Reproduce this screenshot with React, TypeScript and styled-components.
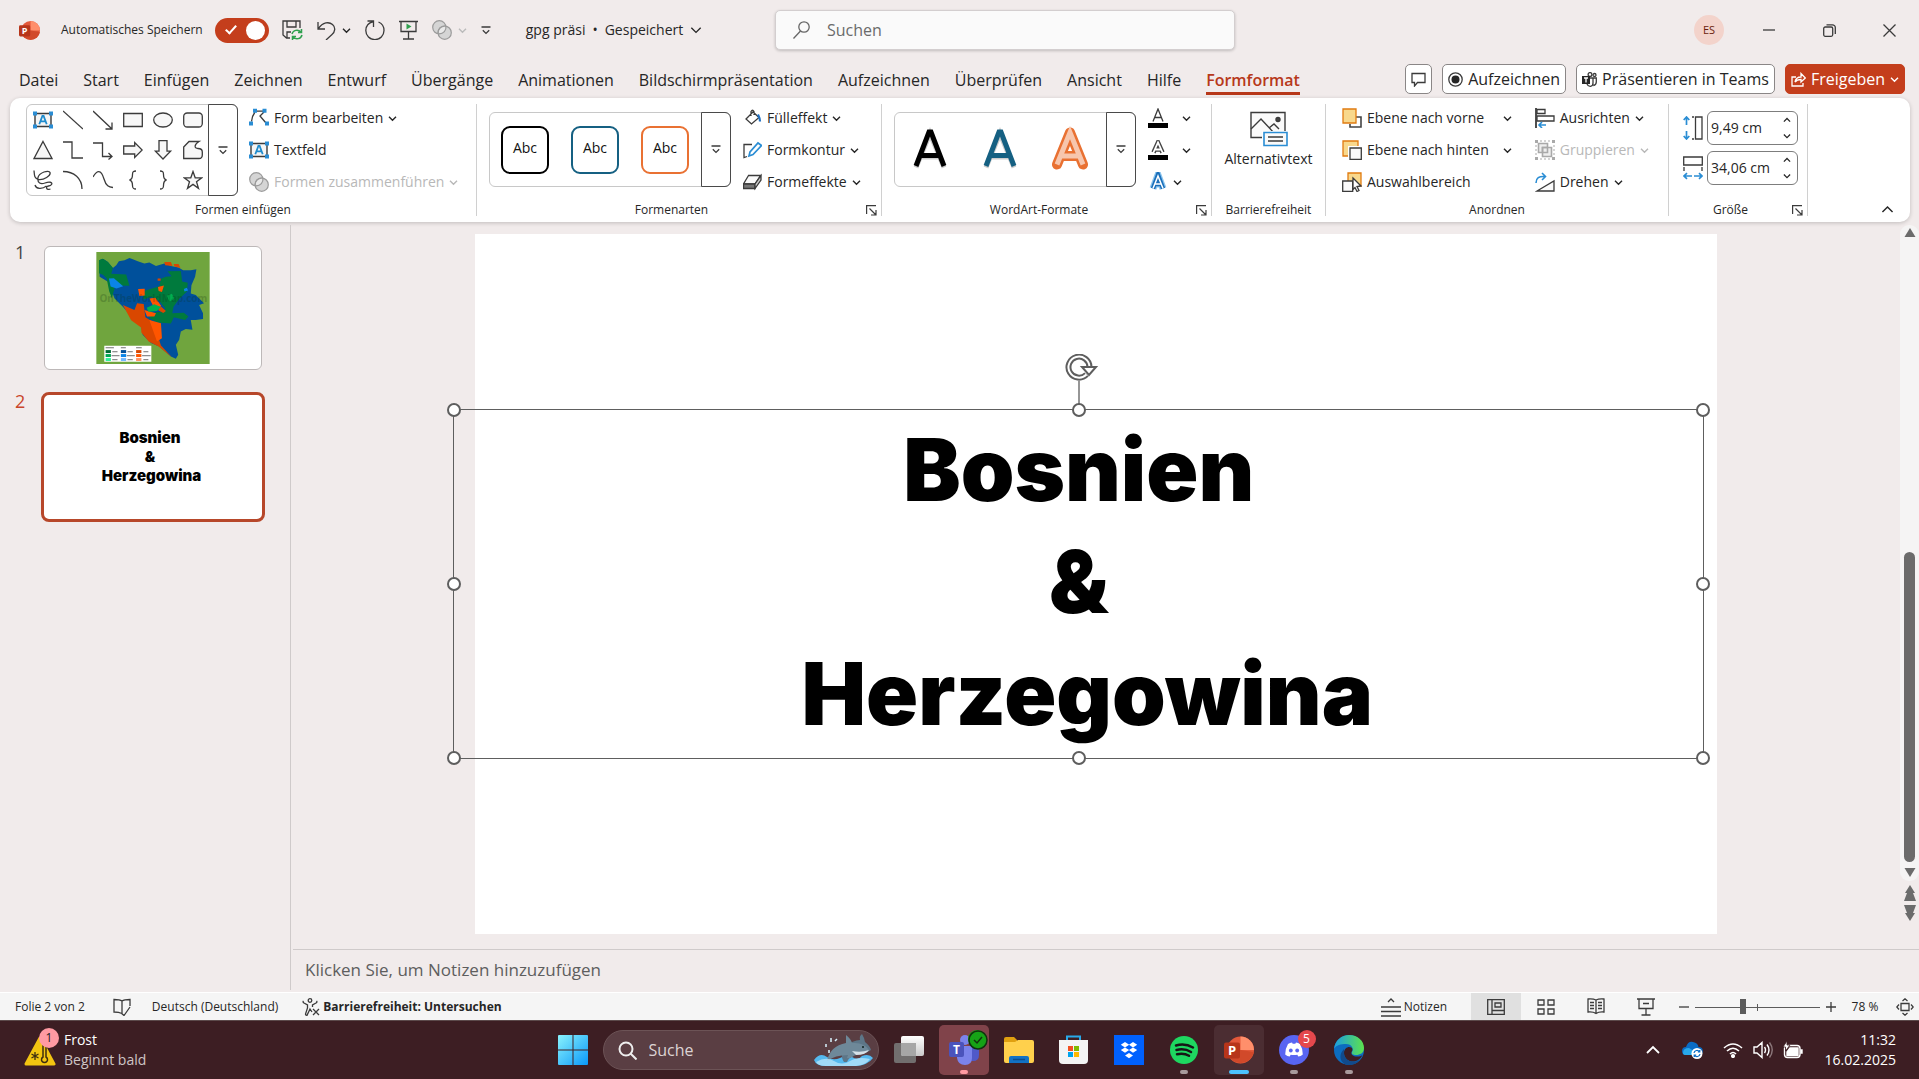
import React, { useState } from "react";
import styled, { createGlobalStyle, css } from "styled-components";

const Global = createGlobalStyle`
  *, *::before, *::after { box-sizing: border-box; }
  body { margin: 0; background: #f1ebeb; color: #262626; font-family: "Open Sans", "Noto Sans", sans-serif; font-size: 14px; line-height: 20px; }
  button, input, textarea { font: inherit; color: inherit; margin: 0; padding: 0; }
  button { background: none; border: 0; }
  svg { display: block; flex: none; }
`;

const Window = styled.div`
  display: flex;
  flex-direction: column;
  height: 100vh;
  overflow: hidden;
`;

/* ---------- icon helper ---------- */
type IconProps = { w?: number; h?: number; box?: string; color?: string; sw?: number; children?: React.ReactNode };
const Icon = ({ w = 20, h = w, box = `0 0 ${w} ${h}`, color = "#3b3b3b", sw = 1.3, children }: IconProps) => (
  <svg width={w} height={h} viewBox={box} fill="none" stroke={color} strokeWidth={sw} aria-hidden="true">
    {children}
  </svg>
);
const Chevron = ({ color = "#262626", w = 9, up = false }: { color?: string; w?: number; up?: boolean }) => (
  <Icon w={w} box="0 0 9 9" color={color} sw={w > 9 ? 1 : 1.4}>
    <path d={up ? "M1 6.3 4.5 2.8 8 6.3" : "M1 2.8 4.5 6.3 8 2.8"} />
  </Icon>
);
const MoreGlyph = () => (
  <Icon w={10} h={9} sw={1.3}>
    <path d="M.5 1h9M1.8 4.2 5 7.4l3.2-3.2" />
  </Icon>
);

/* ---------- title bar ---------- */
const TitleBar = styled.header`
  display: grid;
  grid-template-columns: 775fr minmax(200px, 460px) 684fr;
  align-items: center;
  height: 60px;
  flex: none;
`;
const TitleLeft = styled.div`
  display: flex;
  align-items: center;
  padding-left: 19px;
  min-width: 0;
`;
const SaveLabel = styled.label`
  display: flex;
  align-items: center;
  gap: 12px;
  margin-left: 21px;
  font-size: 12px;
  white-space: nowrap;
`;
const Toggle = styled.input`
  appearance: none;
  width: 54px;
  height: 25px;
  border-radius: 13px;
  background: #c43e1c;
  position: relative;
  &::after {
    content: "";
    position: absolute;
    right: 4px;
    top: 3px;
    width: 19px;
    height: 19px;
    border-radius: 50%;
    background: #fff;
  }
  &::before {
    content: "";
    position: absolute;
    left: 13px;
    top: 5px;
    width: 6px;
    height: 11px;
    border: solid #fff;
    border-width: 0 2px 2px 0;
    transform: rotate(42deg);
  }
`;
const QuickBar = styled.div`
  display: flex;
  align-items: center;
  gap: 14px;
  margin-left: 13px;
`;
const QuickButton = styled.button`
  display: flex;
  align-items: center;
  gap: 6px;
  height: 28px;
`;
const DocName = styled.button`
  display: flex;
  align-items: center;
  gap: 7px;
  margin-left: 35px;
  font-size: 14px;
  white-space: nowrap;
`;
const SearchBox = styled.label`
  display: flex;
  align-items: center;
  gap: 17px;
  height: 40px;
  padding: 0 17px;
  background: #fafafa;
  border: 1px solid #d3cecf;
  border-radius: 5px;
  box-shadow: 0 1px 3px #0003;
`;
const SearchInput = styled.input`
  flex: 1;
  min-width: 0;
  border: 0;
  background: none;
  outline: 0;
  font-size: 16px;
  &::placeholder { color: #6b6b6b; opacity: 1; }
`;
const TitleRight = styled.div`
  display: flex;
  align-items: center;
  justify-content: flex-end;
`;
const Avatar = styled.button`
  width: 30px;
  height: 30px;
  border-radius: 50%;
  background: #f3d3cb;
  color: #6b1d0c;
  font-size: 11px;
  margin-right: 15px;
`;
const WinButton = styled.button`
  display: grid;
  place-items: center;
  width: 60px;
  height: 60px;
`;

/* ---------- tabs ---------- */
const TabRow = styled.nav`
  display: flex;
  align-items: flex-start;
  justify-content: space-between;
  height: 38px;
  padding: 4px 14px 0 19px;
  flex: none;
`;
const Tabs = styled.div`
  display: flex;
  gap: 25px;
`;
const Tab = styled.button<{ $on?: boolean }>`
  height: 31px;
  padding-top: 3px;
  font-size: 16px;
  white-space: nowrap;
  border-bottom: 3px solid transparent;
  ${(p) => p.$on && css`color: #b7381a; font-weight: 600; border-color: #b7381a;`}
`;
const Actions = styled.div`
  display: flex;
  gap: 10px;
`;
const Action = styled.button<{ $primary?: boolean }>`
  display: flex;
  align-items: center;
  gap: 5px;
  height: 30px;
  padding: 0 5px;
  border: 1px solid #8a8686;
  border-radius: 5px;
  background: #fff;
  font-size: 16px;
  white-space: nowrap;
  ${(p) => p.$primary && css`background: #c43e1c; border-color: #c43e1c; color: #fff;`}
`;

/* ---------- ribbon ---------- */
const Ribbon = styled.section`
  display: flex;
  height: 124px;
  margin: 0 9px 0 10px;
  padding: 6px 0;
  border-radius: 10px;
  background: #fff;
  box-shadow: 0 1px 4px #0003;
  flex: none;
`;
const Group = styled.div<{ $w: number }>`
  display: flex;
  flex-direction: column;
  flex: 0 1 ${(p) => p.$w}px;
  min-width: 0;
  height: 112px;
  border-right: 1px solid #d0d0d0;
`;
const GroupBody = styled.div<{ $pad?: number; $gap?: number }>`
  display: flex;
  gap: ${(p) => p.$gap ?? 12}px;
  height: 100px;
  padding-left: ${(p) => p.$pad ?? 12}px;
`;
const GroupFoot = styled.div`
  display: grid;
  grid-template-columns: 1fr 15px;
  align-items: center;
  height: 12px;
  font-size: 12px;
  line-height: 12px;
  text-align: center;
  white-space: nowrap;
`;
const FootLabel = styled.span<{ $wide?: boolean }>`
  grid-column: ${(p) => (p.$wide ? "1 / -1" : "1")};
`;
const Gallery = styled.div<{ $tall?: boolean }>`
  display: flex;
  align-self: flex-start;
  height: ${(p) => (p.$tall ? 92 : 75)}px;
  margin-top: ${(p) => (p.$tall ? 0 : 8)}px;
  border: 1px solid #c8c8c8;
  border-radius: 6px;
`;
const ShapeGrid = styled.div`
  display: grid;
  grid-template-columns: repeat(6, 30px);
  grid-template-rows: repeat(3, 30px);
  padding: 0 1px;
`;
const Cell = styled.button`
  display: grid;
  place-items: center;
`;
const StyleRow = styled.div`
  display: grid;
  grid-template-columns: repeat(3, 70px);
  width: 212px;
`;
const StyleTile = styled.span<{ $c: string }>`
  display: grid;
  place-items: center;
  width: 48px;
  height: 48px;
  padding-bottom: 4px;
  border: 2px solid ${(p) => p.$c};
  border-radius: 9px;
  color: #111;
  font-size: 14px;
`;
const MoreButton = styled.button`
  display: grid;
  place-items: center;
  width: 30px;
  margin: -1px;
  border: 1px solid #4a4a4a;
  border-radius: 0 6px 6px 0;
`;
const Commands = styled.div`
  display: grid;
  grid-template-rows: repeat(3, 32px);
  align-content: start;
  margin-top: -2px;
`;
const Command = styled.button<{ $off?: boolean }>`
  display: flex;
  align-items: center;
  gap: 5px;
  font-size: 14px;
  white-space: nowrap;
  ${(p) => p.$off && css`color: #b8b8b8;`}
`;
const SplitCommand = styled(Command)`
  justify-content: space-between;
  gap: 14px;
`;
const CommandMain = styled.span`
  display: flex;
  align-items: center;
  gap: 5px;
`;
const BigCommand = styled.button`
  display: flex;
  flex-direction: column;
  align-items: center;
  align-self: flex-start;
  gap: 2px;
  width: 100%;
  padding-top: 7px;
  font-size: 14px;
`;
const Sizes = styled.div`
  display: grid;
  gap: 6px;
  align-content: start;
  padding-top: 7px;
`;
const SizeLabel = styled.label`
  display: flex;
  align-items: center;
  gap: 4px;
`;
const SpinBox = styled.span`
  display: flex;
  align-items: center;
  width: 91px;
  height: 34px;
  padding: 0 6px 0 3px;
  border: 1px solid #7d7d7d;
  border-radius: 6px;
`;
const SpinInput = styled.input`
  flex: 1;
  min-width: 0;
  border: 0;
  outline: 0;
  background: none;
  font-size: 14px;
`;
const SpinArrows = styled.span`
  display: grid;
  gap: 8px;
`;
const Collapse = styled.button`
  align-self: flex-end;
  margin: 0 16px 0 auto;
`;

/* ---------- workspace ---------- */
const Workspace = styled.main`
  display: flex;
  flex: 1;
  min-height: 0;
  padding-top: 3px;
`;
const SlideList = styled.aside`
  display: flex;
  flex-direction: column;
  gap: 22px;
  width: 291px;
  padding: 21px 0 0 15px;
  margin-bottom: 2px;
  border-right: 1px solid #cfcaca;
  flex: none;
`;
const SlideItem = styled.button<{ $on?: boolean }>`
  display: grid;
  grid-template-columns: 26px 224px;
  align-items: start;
  text-align: left;
  font-size: 18px;
  line-height: 12px;
  color: ${(p) => (p.$on ? "#c9452a" : "#444")};
`;
const Thumb = styled.span<{ $on?: boolean }>`
  display: grid;
  place-items: center;
  height: ${(p) => (p.$on ? 130 : 124)}px;
  margin: ${(p) => (p.$on ? "0" : "0 3px")};
  background: #fff;
  border: ${(p) => (p.$on ? "3px solid #b7472a" : "1px solid #bdb8b8")};
  border-radius: ${(p) => (p.$on ? 8 : 6)}px;
`;
const SlideNumber = styled.span<{ $on?: boolean }>`
  padding-top: ${(p) => (p.$on ? 3 : 0)}px;
`;
const ThumbText = styled.span`
  padding: 0 6px 2px 0;
  font-family: Inter, "Noto Sans", sans-serif;
  font-weight: 900;
  font-size: 15px;
  line-height: 19px;
  color: #000;
  text-align: center;
  white-space: pre;
`;
const Editor = styled.div`
  display: flex;
  flex-direction: column;
  flex: 1;
  min-width: 0;
`;
const StageRow = styled.div`
  display: flex;
  flex: 1;
  min-height: 0;
`;
const Stage = styled.div`
  display: flex;
  justify-content: center;
  flex: 1;
  min-width: 0;
  padding: 9px 0 15px;
`;
const Slide = styled.div`
  position: relative;
  height: 100%;
  aspect-ratio: 1242 / 700;
  background: #fff;
`;
const Selection = styled.div`
  position: absolute;
  left: -1.7%;
  top: 25%;
  width: 100.7%;
  height: 50%;
  display: grid;
  place-items: center;
  border: 1px solid #5e5e5e;
`;
const SlideTitle = styled.h1`
  margin: 0;
  padding-bottom: 4px;
  font-family: Inter, "Noto Sans", sans-serif;
  font-weight: 900;
  font-size: 86px;
  line-height: 112px;
  color: #000;
  text-align: center;
  white-space: pre;
`;
const Handle = styled.span<{ $x: number; $y: number }>`
  position: absolute;
  left: ${(p) => p.$x}%;
  top: ${(p) => p.$y}%;
  width: 14px;
  height: 14px;
  margin: -7px;
  border: 2px solid #5e5e5e;
  border-radius: 50%;
  background: #fff;
`;
const Rotator = styled.span`
  position: absolute;
  left: 50%;
  bottom: 100%;
  margin-left: -14px;
`;
const ScrollColumn = styled.div`
  display: flex;
  flex-direction: column;
  align-items: center;
  gap: 4px;
  width: 19px;
  padding-bottom: 28px;
`;
const Track = styled.div`
  display: flex;
  flex-direction: column;
  align-items: center;
  flex: 1;
  width: 19px;
  padding: 3px 0 4px;
  background: #f5f4f4;
  border-radius: 9px;
`;
const TrackThumb = styled.div`
  width: 11px;
  height: 310px;
  margin: auto 0 6px;
  border-radius: 6px;
  background: #6b6b6b;
`;
const Notes = styled.label`
  display: flex;
  margin-left: 2px;
  height: 43px;
  padding: 8px 12px;
  border-top: 1px solid #cfcaca;
  flex: none;
`;
const NotesField = styled.textarea`
  flex: 1;
  height: 24px;
  border: 0;
  outline: 0;
  resize: none;
  overflow: hidden;
  background: none;
  font-size: 17px;
  line-height: 24px;
  &::placeholder { color: #5e5e5e; opacity: 1; }
`;

/* ---------- status bar ---------- */
const Status = styled.footer`
  display: flex;
  align-items: center;
  height: 28px;
  padding: 0 5px 0 15px;
  background: #f5f5f5;
  border-top: 1px solid #fff;
  font-size: 12px;
  white-space: nowrap;
  flex: none;
`;
const StatusButton = styled.button<{ $ml?: number; $bold?: boolean }>`
  display: flex;
  align-items: center;
  gap: 3px;
  margin-left: ${(p) => p.$ml ?? 0}px;
  font-weight: ${(p) => (p.$bold ? 700 : 400)};
`;
const Views = styled.div`
  display: flex;
  margin-left: 24px;
`;
const ViewButton = styled.button<{ $on?: boolean }>`
  display: grid;
  place-items: center;
  width: 50px;
  height: 27px;
  background: ${(p) => (p.$on ? "#e0e0e0" : "none")};
`;
const Spacer = styled.div`
  flex: 1;
`;
const Zoom = styled.div`
  display: flex;
  align-items: center;
  gap: 6px;
  margin-left: 8px;
`;
const ZoomSlider = styled.input`
  appearance: none;
  width: 125px;
  height: 16px;
  background:
    linear-gradient(#5c5c5c, #5c5c5c) 62px 5px / 1px 7px no-repeat,
    linear-gradient(#5c5c5c, #5c5c5c) 0 8px / 100% 1px no-repeat;
  &::-webkit-slider-thumb {
    appearance: none;
    width: 6px;
    height: 15px;
    background: #5c5c5c;
  }
`;
const ZoomValue = styled.button`
  width: 42px;
  margin-left: 8px;
  font-size: 12px;
`;

/* ---------- taskbar ---------- */
const Taskbar = styled.div`
  display: grid;
  grid-template-columns: 1fr auto 1fr;
  align-items: center;
  height: 59px;
  background: #3d1e23;
  border-top: 1px solid #5c4a4b;
  color: #fff;
  flex: none;
`;
const Weather = styled.button`
  display: flex;
  gap: 8px;
  align-items: center;
  padding-left: 24px;
  text-align: left;
  font-size: 14px;
`;
const Muted = styled.span`
  display: block;
  color: #cfc5c6;
`;
const Apps = styled.div`
  display: flex;
  gap: 5px;
  padding-left: 2px;
`;
const App_ = styled.button<{ $bg?: string }>`
  position: relative;
  display: grid;
  place-items: center;
  width: 50px;
  height: 50px;
  border-radius: 5px;
  background: ${(p) => p.$bg ?? "none"};
`;
const RunMark = styled.span<{ $c?: string; $w?: number }>`
  position: absolute;
  bottom: 1px;
  left: 50%;
  width: ${(p) => p.$w ?? 8}px;
  height: 4px;
  margin-left: ${(p) => -(p.$w ?? 8) / 2}px;
  border-radius: 2px;
  background: ${(p) => p.$c ?? "#a89a9c"};
`;
const Badge = styled.span<{ $c: string; $ink?: string }>`
  position: absolute;
  right: 3px;
  top: 5px;
  display: grid;
  place-items: center;
  width: 18px;
  height: 18px;
  border-radius: 50%;
  background: ${(p) => p.$c};
  color: ${(p) => p.$ink ?? "#fff"};
  font-size: 12px;
  line-height: 18px;
`;
const WeatherIcon = styled.span`
  position: relative;
  padding-top: 2px;
`;
const WeatherBadge = styled(Badge)`
  right: -3px;
  top: -6px;
  width: 20px;
  height: 20px;
`;
const TaskSearch = styled.label`
  display: flex;
  align-items: center;
  gap: 12px;
  align-self: center;
  width: 276px;
  height: 40px;
  padding: 0 4px 0 14px;
  border: 1px solid #6c5356;
  border-radius: 20px;
  background: #5a3e43;
`;
const TaskInput = styled.input`
  flex: 1;
  min-width: 0;
  border: 0;
  outline: 0;
  background: none;
  font-size: 16px;
  &::placeholder { color: #dcd3d4; opacity: 1; }
`;
const Tray = styled.div`
  display: flex;
  align-items: center;
  justify-content: flex-end;
  gap: 10px;
  padding-right: 23px;
`;
const TrayButton = styled.button<{ $mr?: number }>`
  margin-right: ${(p) => p.$mr ?? 0}px;
`;
const Clock = styled.button`
  width: 74px;
  text-align: right;
  font-size: 14px;
  white-space: nowrap;
`;

/* ---------- drawings ---------- */
const TextBoxIcon = () => (
  <Icon w={20} sw={1.4}>
    <path d="M2 3.5h16v13H2z" fill="#f5f5f5" />
    <path d="M6.3 14.2 9.4 6h1.2l3.1 8.2M7.4 11.4h5.2" stroke="#1e8bcd" strokeWidth="1.8" />
    <path d="M0 1.5h4v4H0zM16 1.5h4v4h-4zM0 14.5h4v4H0zM16 14.5h4v4h-4z" fill="#2a8dd4" stroke="none" />
  </Icon>
);
const MergeIcon = () => (
  <Icon w={20} color="#9b9b9b" sw={1.2}>
    <circle cx="7.3" cy="7.3" r="6.6" fill="#d5d5d5" />
    <circle cx="12.7" cy="12.7" r="6.6" fill="#d5d5d5" />
    <path d="M6.100 12.700A6.600 6.600 0 0 1 12.700 6.100q1.100 0 1.200.2A6.600 6.600 0 0 1 7.300 13.900z" fill="#e9e9e9" />
  </Icon>
);
const shapes: { name: string; art: React.ReactNode }[] = [
  { name: "Linie", art: <path d="M0 1l20 18" /> },
  { name: "Pfeil", art: <path d="M0 1l19 18M12.5 19H19v-6.5" /> },
  { name: "Rechteck", art: <path d="M.7 3.5h18.6v13H.7z" fill="#f7f7f7" /> },
  { name: "Ellipse", art: <ellipse cx="10" cy="10" rx="9.3" ry="7" fill="#f7f7f7" /> },
  { name: "Abgerundetes Rechteck", art: <rect x=".7" y="3" width="18.6" height="14" rx="3.5" fill="#f7f7f7" /> },
  { name: "Dreieck", art: <path d="M10 1.5 19 18.5H1z" fill="#f7f7f7" /> },
  { name: "Winkel", art: <path d="M0 2h9v16h11" /> },
  { name: "Winkelpfeil", art: <path d="M0 3h9.500v13.500H19M15.500 13l3.500 3.500-3.500 3" /> },
  { name: "Pfeil rechts", art: <path d="M.7 6h11V2.500l7.500 7.500-7.500 7.500V14H.7z" fill="#f7f7f7" /> },
  { name: "Pfeil unten", art: <path d="M6 .7h8v10.500h3.600L10 19l-7.600-7.800H6z" fill="#f7f7f7" /> },
  { name: "Freihandform", art: <path d="M.7 7 6 1.500h10c-5 3-5 7-1 7 3 0 4.300 1 4.300 3.500v3c0 2-1.500 3.500-3.300 3.500H.7z" fill="#f7f7f7" /> },
  { name: "Skizze", art: <path d="M1 .5C1.500 5 1 8 5 9.500c6 1 13-4 12-7s-11 0-12 5c-1 6 3 7 7 5.500s8-1 6.500 1.500-5 .5-5 3 2.500 2 4 1.500M13.500 16C9 19.500 3 19 2 15" /> },
  { name: "Bogen", art: <path d="M0 1.500c11 0 19 7 19 17.500" /> },
  { name: "Kurve", art: <path d="M0 7c4-7 8-8 11 2 2 7 5 8 9 8.500" /> },
  { name: "Geschweifte Klammer links", art: <path d="M13 1c-3 0-3.500.8-3.500 3.500S9 9.500 6.500 10c2.500.5 3 3 3 5.500S10 19 13 19" /> },
  { name: "Geschweifte Klammer rechts", art: <path d="M7 1c3 0 3.500.8 3.500 3.500S11 9.500 13.500 10c-2.500.5-3 3-3 5.500S10 19 7 19" /> },
  { name: "Stern", art: <path d="m10 1.500 2.200 6.300h6.600l-5.300 4 2 6.600L10 14.400l-5.500 4 2-6.600-5.300-4h6.600z" fill="#f7f7f7" /> },
];
const PptLogo = ({ s = 21 }: { s?: number }) => (
  <svg width={s} height={s} viewBox="0 0 30 30" aria-hidden="true">
    <circle cx="16.500" cy="15" r="13.500" fill="#e2583a" />
    <path d="M16.500 1.500A13.500 13.500 0 0 1 30 15H16.500z" fill="#ff8f6b" />
    <path d="M3.200 17a13.500 13.500 0 0 0 26.600 0L16.500 15z" fill="#d1492a" />
    <rect y="7.500" width="16" height="16" rx="2" fill="#b7351a" />
    <text x="8" y="20" textAnchor="middle" fontFamily="Open Sans, sans-serif" fontSize="13" fontWeight="700" fill="#fff">P</text>
  </svg>
);
const BosniaMap = () => (
  <svg width="114" height="112" viewBox="0 0 342 338" role="img" aria-label="Karte Bosnien und Herzegowina">
    <path fill="#70a53e" d="M0 0h342v338H0z" />
    <path fill="#00509b" d="m8 25 12-5 15 10 15 18 10-8 8-12 17-3 15-7 10 4 15 6 20 7 15-3 20 10 25-7 20 7 23 5 14 8h23l17-3-4 23-11 25-2 25 15 5 25 25-15 5 12 25v17l-22 3h-15l5 30-20-3-15 8-5 25-10 15 7 30-7 12-15-7-35-30-25-10-25-25-5-30-25-20-30-35-25-25-10-25-10-25-25-15z" />
    <path fill="#007a3d" d="m8 25 12-5 15 10 15 18-5 18 45 2 10 34-35-1-10 8-8 30-8-20-8-40-11-10-12-5z" />
    <path fill="#007a3d" d="m215 58 40-1 4 32 17 4-3 27-22 20-18 25-4 20 35-2 14 12-10 10-34-8-9 19-40-3-27-14 22-18 25-1 3-10-18-22-25-13-22 8-3-15 8-12 20-6 22-7 5-22 14-6 18-2z" />
    <path fill="#0a84e8" d="m38 80 15-1 28 24-20 7-18-6zM264 112l9-4 4 8-11 3z" />
    <path fill="#d94700" d="m80 160 35 15 8-20 20 2 5 40 25 15 22 70 33 36-40-33-30-15-22-27-1-15-30-22zM205 30l20 0 5 12-22-2zM233 36l15 0 6 12-18-4zM185 80h9v7h-9zM190 160l20 18-8 6-15-8z" />
    <path fill="#ff5500" d="m126 112 20-1v20l-16 2zM186 106l18-5-6 20-10-3zM160 140l18-2 18 25-20 8zM160 205l35 10 3 45-15 10zM145 175l35 10-5 10-22 0z" />
    <path fill="#00b050" d="m152 168 23-10 20 8-12 12-26 2zM213 132l15-6 7 15-14 9z" />
    <text x="172" y="152" textAnchor="middle" fontFamily="Open Sans, sans-serif" fontWeight="700" fontSize="30" fill="#103010" opacity=".22">OnTheWorldMap.com</text>
    <path fill="#fff" d="M24 283h142v48H24z" />
    <path fill="#006b35" d="M28 296h16v9H28z" /><path fill="#00a651" d="M28 308h16v9H28z" /><path fill="#2ef29a" d="M28 320h16v9H28z" />
    <path fill="#00509b" d="M74 296h16v9H74z" /><path fill="#0a84e8" d="M74 308h16v9H74z" /><path fill="#72b8ff" d="M74 320h16v9H74z" />
    <path fill="#d94700" d="M120 296h16v9h-16z" /><path fill="#ff5500" d="M120 308h16v9h-16z" /><path fill="#ff9466" d="M120 320h16v9h-16z" />
    <path stroke="#555" strokeWidth="2.500" d="M28 289h25M74 289h15M120 289h17M48 301h16M46 313h24M48 325h16M94 301h16M92 313h24M94 325h16M142 301h15M138 313h26M142 325h15" />
  </svg>
);
const WordArtA = ({ fill, outline, shadow }: { fill: string; outline?: string; shadow?: boolean }) => (
  <svg width="44" height="48" viewBox="0 0 44 48" aria-hidden="true">
    {shadow && <path d="M8 41.500 22 7.500l14 34M13 31h18" fill="none" stroke="#0003" strokeWidth="5" />}
    {outline && <path d="M9 38.500 22 6.500l13 32M13.500 30h17" fill="none" stroke={outline} strokeWidth="10" strokeLinejoin="round" strokeLinecap="round" />}
    <path d={outline ? "M9 38.500 22 6.500l13 32M13.500 30h17" : "M8 40 21 6h2l13 34M13 29.500h18"} fill="none" stroke={fill} strokeWidth={5} />
  </svg>
);

const tabs = ["Datei", "Start", "Einfügen", "Zeichnen", "Entwurf", "Übergänge", "Animationen", "Bildschirmpräsentation", "Aufzeichnen", "Überprüfen", "Ansicht", "Hilfe", "Formformat"];
const slideText = "Bosnien\n&\n Herzegowina";
const handles = [[0, 0], [50, 0], [100, 0], [0, 50], [100, 50], [0, 100], [50, 100], [100, 100]];

const Launcher = ({ label }: { label: string }) => (
  <button aria-label={label}>
    <Icon w={11} sw={1.2}><path d="M.6 9V.6H10M3.500 3.500l6 6M10 5v5H5" /></Icon>
  </button>
);

const Header = () => (
  <TitleBar>
    <TitleLeft>
      <PptLogo />
      <SaveLabel>Automatisches Speichern<Toggle type="checkbox" defaultChecked /></SaveLabel>
      <QuickBar>
        <QuickButton aria-label="Speichern">
          <Icon w={21}>
            <path d="M8 18H4.500L1 15V1h17v7M5 1v6h9V1M5 18v-6h4" />
            <path d="M10 14c1-4 6-5 9-2M19.500 9v3.500H16M20 15c-1 4-6 5-9 2M10.500 20v-3.500H14" stroke="#2fa04e" strokeWidth="1.500" />
          </Icon>
        </QuickButton>
        <QuickButton aria-label="Rückgängig">
          <Icon w={19}><path d="M1 1v7h7M1.300 7.700C6 1 12 .5 15.500 3.500S18 11 15 13.500L9 19" /></Icon>
          <Chevron />
        </QuickButton>
        <QuickButton aria-label="Wiederholen">
          <Icon w={20}><path d="M2.500 1h6v6M8.300 1.500C3 3 .8 7 .8 10.500a9 9 0 0 0 18.200 0c0-4-2-7-5.500-8.500" /></Icon>
        </QuickButton>
        <QuickButton aria-label="Präsentation starten">
          <Icon w={19} h={20}><path d="M0 1.500h19M2 1.500v10h15v-10M9.500 12v7M4 19h11" /><path d="m7.500 3.500 5 3-5 3z" fill="#2fa04e" stroke="none" /></Icon>
        </QuickButton>
        <QuickButton aria-label="Formen zusammenführen" disabled>
          <MergeIcon /><Chevron color="#bbb" />
        </QuickButton>
        <QuickButton aria-label="Symbolleiste anpassen"><MoreGlyph /></QuickButton>
      </QuickBar>
      <DocName><span>gpg präsi</span><span>•</span><span>Gespeichert</span><Chevron w={12} /></DocName>
    </TitleLeft>
    <SearchBox>
      <Icon w={17} h={18} color="#666"><circle cx="11" cy="6" r="5.200" /><path d="m7.500 10-7 7.500" /></Icon>
      <SearchInput placeholder="Suchen" aria-label="Suchen" />
    </SearchBox>
    <TitleRight>
      <Avatar>ES</Avatar>
      <WinButton aria-label="Minimieren"><Icon w={12}><path d="M0 6h12" /></Icon></WinButton>
      <WinButton aria-label="Wiederherstellen"><Icon w={13}><rect x=".7" y="3" width="9" height="9.300" rx="1.500" /><path d="M3.500 .8h6a2.800 2.800 0 0 1 2.800 2.800V10" /></Icon></WinButton>
      <WinButton aria-label="Schließen"><Icon w={13}><path d="m.5.5 12 12M12.500.5l-12 12" /></Icon></WinButton>
    </TitleRight>
  </TitleBar>
);

const RibbonPanel = () => {
  const [h, setH] = useState("9,49 cm");
  const [w, setW] = useState("34,06 cm");
  return (
    <Ribbon>
      <Group $w={467}>
        <GroupBody $pad={16} $gap={11}>
          <Gallery $tall>
            <ShapeGrid>
              <Cell aria-label="Textfeld"><TextBoxIcon /></Cell>
              {shapes.map((s) => <Cell key={s.name} aria-label={s.name}><Icon w={20}>{s.art}</Icon></Cell>)}
            </ShapeGrid>
            <MoreButton aria-label="Weitere Formen"><MoreGlyph /></MoreButton>
          </Gallery>
          <Commands>
            <Command>
              <Icon w={20}><path d="M2.500 13.500Q3 8 6 4M7 3.200h8M15 4l-4 4 6 7" /><path d="M4 .8h4v4H4zM13.500.8h4v4h-4zM0 13.500h4v4H0zM16 13.500h4v4h-4z" fill="#2a8dd4" stroke="none" /></Icon>
              Form bearbeiten<Chevron />
            </Command>
            <Command><TextBoxIcon />Textfeld</Command>
            <Command $off disabled><MergeIcon />Formen zusammenführen<Chevron color="#b8b8b8" /></Command>
          </Commands>
        </GroupBody>
        <GroupFoot><FootLabel $wide>Formen einfügen</FootLabel></GroupFoot>
      </Group>

      <Group $w={405}>
        <GroupBody>
          <Gallery>
            <StyleRow>
              {["#000", "#156082", "#e97132"].map((c) => <Cell key={c}><StyleTile $c={c}>Abc</StyleTile></Cell>)}
            </StyleRow>
            <MoreButton aria-label="Weitere Formenarten"><MoreGlyph /></MoreButton>
          </Gallery>
          <Commands>
            <Command><Icon w={19}><path d="m10 3-7 7 5.500 5 7.500-6.500zM8 7V2.500Q9.500 0 11 2.500V6" /><path d="M15 5.500q2 4 2 7" stroke="#1f6fc0" strokeWidth="2.200" /></Icon>Fülleffekt<Chevron /></Command>
            <Command><Icon w={19}><path d="M9 3.500H1v13l3-1" /><path d="m6 15 1-4 8-9 3.500 2.500-8.500 9z" stroke="#2a8dd4" strokeWidth="1.700" /></Icon>Formkontur<Chevron /></Command>
            <Command><Icon w={19}><path d="m5.500 2.500-5 8.500H12l5.500-8.500z" fill="#fafafa" /><path d="M.5 11v4.500H12V11z" fill="#777" /><path d="M12 15.500V11l6-8.500v4.500z" fill="#ccc" /></Icon>Formeffekte<Chevron /></Command>
          </Commands>
        </GroupBody>
        <GroupFoot><FootLabel>Formenarten</FootLabel><Launcher label="Formenarten öffnen" /></GroupFoot>
      </Group>

      <Group $w={330}>
        <GroupBody>
          <Gallery>
            <StyleRow>
              <Cell aria-label="WordArt schwarz"><WordArtA fill="#000" shadow /></Cell>
              <Cell aria-label="WordArt blau"><WordArtA fill="#156082" shadow /></Cell>
              <Cell aria-label="WordArt orange"><WordArtA fill="#f7c6ad" outline="#e97132" /></Cell>
            </StyleRow>
            <MoreButton aria-label="Weitere WordArt-Formate"><MoreGlyph /></MoreButton>
          </Gallery>
          <Commands>
            <SplitCommand aria-label="Textfüllung"><Icon w={20}><path d="M5 13.500 10 1l5 12.500M6.500 9.500h7" /><path d="M0 15h20v5H0z" fill="#000" stroke="none" /></Icon><Chevron /></SplitCommand>
            <SplitCommand aria-label="Textkontur"><Icon w={20}><path d="M5.500 12.500 10 2.500l4.500 10M7 9.500h6" stroke="#444" strokeWidth="4.500" /><path d="M5 13.500 10 2.500l5 11M7 9.500h6" stroke="#fff" strokeWidth="1.800" /><path d="M0 15h20v5H0z" fill="#000" stroke="none" /></Icon><Chevron /></SplitCommand>
            <Command aria-label="Texteffekte"><Icon w={20}><path d="M5 16.500 10 3l5 13.500M6.500 12h7" stroke="#8cc5ee" strokeWidth="7" /><path d="M5 16.500 10 3l5 13.500M6.500 12h7" stroke="#1a6fba" strokeWidth="4.500" /><path d="M5 16.500 10 4l5 12.500M6.500 12h7" stroke="#fff" strokeWidth="1.500" /></Icon><Chevron /></Command>
          </Commands>
        </GroupBody>
        <GroupFoot><FootLabel>WordArt-Formate</FootLabel><Launcher label="WordArt-Formate öffnen" /></GroupFoot>
      </Group>

      <Group $w={114}>
        <GroupBody $pad={0}>
          <BigCommand>
            <Icon w={38} h={36} sw={1.400}>
              <path d="M1 1.500h34v25H1z" fill="#fafafa" /><path d="m1 18 10-10 13 14M19 17l5-4 5 5" /><circle cx="28" cy="8.500" r="2" fill="#444" />
              <path d="M12 20h27v16H12z" fill="#fff" stroke="none" /><path d="M14 21.500h23v13H14z" fill="#fafafa" stroke="#2a8dd4" strokeWidth="1.600" /><path d="M18 26h15M18 30h15" />
            </Icon>
            Alternativtext
          </BigCommand>
        </GroupBody>
        <GroupFoot><FootLabel $wide>Barrierefreiheit</FootLabel></GroupFoot>
      </Group>

      <Group $w={343}>
        <GroupBody $pad={16} $gap={23}>
          <Commands>
            <SplitCommand><CommandMain><Icon w={20}><path d="M14 9h5v10H8v-3" stroke="#444" strokeWidth="1.600" /><path d="M1 1h13v14H1z" fill="#f8d88c" stroke="#e07b10" /></Icon>Ebene nach vorne</CommandMain><Chevron /></SplitCommand>
            <SplitCommand><CommandMain><Icon w={20}><path d="M1 1h15v15H1z" fill="#f8d88c" stroke="#e07b10" /><path d="M8 8h11.300v11.300H8z" fill="#fafafa" stroke="#fff" strokeWidth="4" /><path d="M8 8h11.300v11.300H8z" fill="#fafafa" /></Icon>Ebene nach hinten</CommandMain><Chevron /></SplitCommand>
            <Command><Icon w={20}><path d="M6 1h13v13H6z" fill="#f8d88c" stroke="#e07b10" /><path d="M.7 9h10v10.300H.7z" fill="#fafafa" /><path d="m11 6 8 8-4 .5 2 4-2 1-2-4-2 2z" fill="#fff" /></Icon>Auswahlbereich</Command>
          </Commands>
          <Commands>
            <Command><Icon w={20}><path d="M1 0v20" strokeWidth="1.800" /><path d="M2 1.500h8v4H2zM2 8h17v5H2z" /><path d="M11 17H4M7 14l-3 3 3 3" stroke="#2a8dd4" strokeWidth="1.600" /></Icon>Ausrichten<Chevron /></Command>
            <Command $off disabled>
              <Icon w={20} color="#a9a9a9" sw={1.600}>
                <path d="M3.500 3.500h9v9h-9zM7.500 7.500h9v9h-9z" fill="#eee" /><path d="M7.500 12.500v-5h5" />
                <path d="M0 0h3v3H0zM17 0h3v3h-3zM0 17h3v3H0zM17 17h3v3h-3z" fill="#a9a9a9" stroke="none" />
                <path d="M5 1h10M5 19h10M1 5v10M19 5v10" strokeWidth="1" strokeDasharray="2 2" />
              </Icon>
              Gruppieren<Chevron color="#b8b8b8" />
            </Command>
            <Command><Icon w={20}><path d="M2 19h17V9z" fill="#fafafa" /><path d="M1 11c0-5 3-7 9-6.500M7 1l3.500 3.500L7 8" stroke="#2a8dd4" strokeWidth="1.600" /></Icon>Drehen<Chevron /></Command>
          </Commands>
        </GroupBody>
        <GroupFoot><FootLabel $wide>Anordnen</FootLabel></GroupFoot>
      </Group>

      <Group $w={139}>
        <GroupBody $pad={14}>
          <Sizes>
            <SizeLabel>
              <Icon w={20} h={24}><path d="M12.500 1h6.500v22h-6.500zM9 1h2M9 23h2" /><path d="M3.500 1v8M.7 4l2.800-3 2.800 3M3.500 15v8M.7 20l2.800 3 2.800-3" stroke="#2a8dd4" strokeWidth="1.700" /></Icon>
              <SpinBox>
                <SpinInput aria-label="Formenhöhe" value={h} onChange={(e) => setH(e.target.value)} />
                <SpinArrows><Chevron up w={8} /><Chevron w={8} /></SpinArrows>
              </SpinBox>
            </SizeLabel>
            <SizeLabel>
              <Icon w={20} h={24}><path d="M.7 1h18.600v8H.7zM1 11v4M19 11v4" /><path d="M1 20h8M4 17.200 1 20l3 2.800M11 20h8M16 17.200l3 2.800-3 2.800" stroke="#2a8dd4" strokeWidth="1.700" /></Icon>
              <SpinBox>
                <SpinInput aria-label="Formenbreite" value={w} onChange={(e) => setW(e.target.value)} />
                <SpinArrows><Chevron up w={8} /><Chevron w={8} /></SpinArrows>
              </SpinBox>
            </SizeLabel>
          </Sizes>
        </GroupBody>
        <GroupFoot><FootLabel>Größe</FootLabel><Launcher label="Größe öffnen" /></GroupFoot>
      </Group>
      <Collapse aria-label="Menüband reduzieren"><Chevron up w={13} /></Collapse>
    </Ribbon>
  );
};

const Triangle = ({ up, double }: { up?: boolean; double?: boolean }) => (
  <svg width="12" height={double ? 16 : 9} viewBox={double ? "0 0 12 16" : "0 0 12 9"} fill="#6b6b6b" aria-hidden="true">
    {double ? (
      <path d={up ? "M6 0l5 8H9l3 8H0l3-8H1z" : "M6 16l5-8H9l3-8H0l3 8H1z"} />
    ) : (
      <path d={up ? "M6 0l5.500 9H.5z" : "M6 9 .5 0h11z"} />
    )}
  </svg>
);

const WorkArea = () => (
  <Workspace>
    <SlideList>
      <SlideItem><SlideNumber>1</SlideNumber><Thumb><BosniaMap /></Thumb></SlideItem>
      <SlideItem $on><SlideNumber $on>2</SlideNumber><Thumb $on><ThumbText>{slideText}</ThumbText></Thumb></SlideItem>
    </SlideList>
    <Editor>
      <StageRow>
        <Stage>
          <Slide>
            <Selection>
              <SlideTitle>{slideText}</SlideTitle>
              <Rotator>
                <Icon w={34} h={56} color="#5e5e5e">
                  <path d="M14 27v29" />
                  <path d="M21.500 20.500A10.500 10.500 0 1 1 24.500 13" strokeWidth="6" />
                  <path d="M21.500 20.500A10.500 10.500 0 1 1 24.500 13" stroke="#fff" strokeWidth="2" />
                  <path d="M17 13h14l-7 8z" fill="#fff" strokeWidth="2" />
                </Icon>
              </Rotator>
              {handles.map(([x, y]) => <Handle key={`${x}-${y}`} $x={x} $y={y} />)}
            </Selection>
          </Slide>
        </Stage>
        <ScrollColumn>
          <Track><Triangle up /><TrackThumb /><Triangle /></Track>
          <Triangle up double />
          <Triangle double />
        </ScrollColumn>
      </StageRow>
      <Notes><NotesField aria-label="Notizen" placeholder="Klicken Sie, um Notizen hinzuzufügen" /></Notes>
    </Editor>
  </Workspace>
);

const StatusBar = () => (
  <Status>
    <span>Folie 2 von 2</span>
    <StatusButton $ml={28} aria-label="Rechtschreibprüfung">
      <Icon w={18}><path d="M9 3v12.500M9 3Q7 1.500 1 1.500V14q5 0 8 1.500M9 3q2-1.500 8-1.500V8M8 15l3 2.500L17 9" /></Icon>
    </StatusButton>
    <StatusButton $ml={21}>Deutsch (Deutschland)</StatusButton>
    <StatusButton $ml={24} $bold>
      <Icon w={18}><circle cx="8" cy="2.500" r="1.800" /><path d="M1.500 3q-1 1 .5 2l3.500 2v3L3.500 16q0 1.500 1.500 1.300L8 11l2 3M14.500 3q1 1-.5 2l-3.500 2v2M11 11l6 6M17 11l-6 6" /></Icon>
      Barrierefreiheit: Untersuchen
    </StatusButton>
    <Spacer />
    <StatusButton><Icon w={20}><path d="M0 10h20M0 14.500h20M0 19h20M7 5l3-3 3 3" /></Icon>Notizen</StatusButton>
    <Views>
      <ViewButton $on aria-label="Normal"><Icon w={18} h={16}><path d="M.7.700h16.600v14.600H.7zM5 .7v14.600M5 11.500h12M8 4h6v4H8z" /></Icon></ViewButton>
      <ViewButton aria-label="Foliensortierung"><Icon w={18} h={16}><path d="M1 1h6v5H1zM11 1h6v5h-6zM1 10h6v5H1zM11 10h6v5h-6z" /></Icon></ViewButton>
      <ViewButton aria-label="Leseansicht"><Icon w={18} h={17}><path d="M9 2Q6 .5 1 1v13q5-.5 8 1.500 3-2 8-1.500V1q-5-.5-8 1zm0 0v13M3 4.500h4M3 7.500h4M3 10.500h4M11 4.500h4M11 7.500h4M11 10.500h4" /></Icon></ViewButton>
      <ViewButton aria-label="Bildschirmpräsentation"><Icon w={18} h={18}><path d="M0 1h18M2 1v9.500h14V1M9 10.500V17M4.500 17h9M6 5.500h6" /></Icon></ViewButton>
    </Views>
    <Zoom>
      <button aria-label="Verkleinern"><Icon w={10}><path d="M0 5h10" /></Icon></button>
      <ZoomSlider type="range" min={10} max={190} defaultValue={78} aria-label="Zoom" />
      <button aria-label="Vergrößern"><Icon w={10}><path d="M0 5h10M5 0v10" /></Icon></button>
    </Zoom>
    <ZoomValue>78 %</ZoomValue>
    <StatusButton $ml={10} aria-label="An Fenster anpassen">
      <Icon w={18}><path d="M5 5.500h8v7H5zM6.500 3 9 .8 11.500 3M6.500 15 9 17.200 11.500 15M3 6.500.8 9 3 11.500M15 6.500 17.200 9 15 11.500" /></Icon>
    </StatusButton>
  </Status>
);

const TaskbarPanel = () => (
  <Taskbar>
    <Weather>
      <WeatherIcon>
        <svg width="32" height="30" viewBox="0 0 32 30" aria-hidden="true">
          <path d="M16 2 30 28H2z" fill="#f2c511" stroke="#f2c511" strokeWidth="3" strokeLinejoin="round" />
          <path d="M11 16v8M7.500 18l7 4M14.500 18l-7 4" stroke="#3d2e10" strokeWidth="1.300" />
          <path d="M19 8v13a3 3 0 1 0 3 0V8" fill="none" stroke="#3d2e10" strokeWidth="1.500" />
        </svg>
        <WeatherBadge $c="#ff9aa2" $ink="#222">1</WeatherBadge>
      </WeatherIcon>
      <span>Frost<Muted>Beginnt bald</Muted></span>
    </Weather>
    <Apps>
      <App_ aria-label="Start">
        <svg width="30" height="30" viewBox="0 0 30 30"><defs><linearGradient id="win" x1="0" y1="0" x2="1" y2="1"><stop stopColor="#8af3fd" /><stop offset="1" stopColor="#0a98f8" /></linearGradient></defs><path fill="url(#win)" d="M0 1q0-1 1-1h13.500v14.500H0zM15.500 0H29q1 0 1 1v13.500H15.500zM0 15.500h14.500V30H1q-1 0-1-1zM15.500 15.500H30V29q0 1-1 1H15.500z" /></svg>
      </App_>
      <TaskSearch>
        <Icon w={19} color="#eee" sw={2}><circle cx="8" cy="8" r="6.500" /><path d="m12.500 12.500 6 6" /></Icon>
        <TaskInput placeholder="Suche" aria-label="Suche" />
        <svg width="60" height="32" viewBox="0 0 60 32" aria-hidden="true">
          <path d="M0 26q6-8 13-3 6 4 13 1 7-4 12-1 6 4 10-1 7-3 11 2-5 7-17 8H12Q2 32 0 26z" fill="#55b9ef" />
          <path d="M30 28C26 22 27 12 38 8q5-2 8-2-1-4 2-6 2 3 3 8 5 4 6 8-5 4-11 3l-6 3q-5 1-7 6z" fill="#5d7688" />
          <path d="M13 27q3-15 19-18V1q5 4 6 8 12-1 17 7-4 5-14 4-3 5-8 4l1-3q-13 0-21 6z" fill="#6e8899" />
          <path d="M55 16q-8 3-17 1l4 4q10 0 13-5z" fill="#d5e1e8" /><circle cx="49" cy="13" r="1" fill="#122" />
          <path d="M2 28q10-6 18-1t16 0 20-2q-4 6-14 7H12q-8 0-10-4z" fill="#b4e4fa" opacity=".8" />
          <path d="M17 4v4M12 10v3M21 7l2-2M15 16v3" stroke="#d9f3ff" strokeWidth="1.500" />
        </svg>
      </TaskSearch>
      <App_ aria-label="Aktive Anwendungen">
        <svg width="30" height="28" viewBox="0 0 30 28"><defs><linearGradient id="tv" x2="0" y2="1"><stop stopColor="#fff" /><stop offset="1" stopColor="#c9c9c9" /></linearGradient></defs><rect y="7" width="22" height="20" rx="2" fill="#716e6e" /><rect x="7" width="23" height="20" rx="2" fill="url(#tv)" /><path d="M7 7h15v13H9q-2 0-2-2z" fill="#a6a6a6" /></svg>
      </App_>
      <App_ $bg="#80434a" aria-label="Teams">
        <svg width="32" height="32" viewBox="0 0 32 32"><circle cx="26" cy="10" r="4" fill="#5059c9" /><circle cx="17" cy="6" r="5" fill="#7b83eb" /><path d="M20 13h11v8q0 6-6 6t-5-6z" fill="#5059c9" /><path d="M9 12h15v12q0 7-7 7t-8-7z" fill="#7b83eb" /><rect x="1" y="8" width="15" height="15" rx="2" fill="#4b53bc" /><text x="8.500" y="20" fontSize="12" fontWeight="700" textAnchor="middle" fontFamily="Open Sans, sans-serif" fill="#fff">T</text></svg>
        <Badge $c="#13a10e"><Icon w={20} color="#10340e" sw={1.500}><circle cx="10" cy="10" r="9" fill="#16a316" /><path d="m6 10 3 3 5-6" /></Icon></Badge>
        <RunMark $c="#ff9aa2" />
      </App_>
      <App_ aria-label="Explorer">
        <svg width="30" height="26" viewBox="0 0 30 26"><path d="M0 2q0-2 2-2h8l3 3v6H0z" fill="#e0a010" /><path d="M0 5h11l3-2h14q2 0 2 2v19q0 2-2 2H2q-2 0-2-2z" fill="#ffd04c" /><path d="M5 26v-5q0-2 2-2h16q2 0 2 2v5z" fill="#1272c4" /><path d="M9 22.500h12" stroke="#0c4d8c" strokeWidth="1.500" /></svg>
      </App_>
      <App_ aria-label="Microsoft Store">
        <svg width="29" height="30" viewBox="0 0 29 30"><path d="M8 6V1.500h13V6" fill="none" stroke="#29a9ea" strokeWidth="2" /><path d="M0 5h29v20q0 4-4 4H4q-4 0-4-4z" fill="#f4f4f4" /><path fill="#f25022" d="M9 11h5v5H9z" /><path fill="#7fba00" d="M15 11h5v5h-5z" /><path fill="#00a4ef" d="M9 17h5v5H9z" /><path fill="#ffb900" d="M15 17h5v5h-5z" /></svg>
      </App_>
      <App_ aria-label="Dropbox">
        <svg width="30" height="30" viewBox="0 0 30 30"><path fill="#0061fe" d="M0 0h30v30H0z" /><path fill="#fff" d="m11 7 4.200 2.700L11 12.400 6.800 9.700zM19 7l4.200 2.700-4.200 2.700-4-2.700zM11 12.400l4.200 2.700-4.200 2.700-4.200-2.700zM19 12.400l4.200 2.700-4.200 2.700-4-2.700zM15 18l4 2.600-4 2.700-4-2.700z" /></svg>
      </App_>
      <App_ aria-label="Spotify">
        <svg width="28" height="28" viewBox="0 0 28 28"><circle cx="14" cy="14" r="14" fill="#1ed760" /><path d="M6 9.500q9-2.500 17 2M6.500 14q8-2 14.500 2M7 18.300q7-1.500 12 1.500" fill="none" stroke="#161616" strokeWidth="2.500" strokeLinecap="round" /></svg>
        <RunMark />
      </App_>
      <App_ $bg="#4b2d32" aria-label="PowerPoint"><PptLogo s={30} /><RunMark $c="#4cc2ff" $w={20} /></App_>
      <App_ aria-label="Discord">
        <svg width="30" height="30" viewBox="0 0 30 30"><circle cx="15" cy="15" r="15" fill="#5865f2" /><path d="M9 9q2-1.500 4-1.500l.7 1.200h2.600L17 7.500q2 0 4 1.500 3 5 2.800 10.500-2 1.800-4.500 2l-1-1.800q-3.300.8-6.600 0l-1 1.800q-2.500-.2-4.500-2Q6 14 9 9z" fill="#fff" /><circle cx="11.800" cy="15.500" r="1.900" fill="#5865f2" /><circle cx="18.200" cy="15.500" r="1.900" fill="#5865f2" /></svg>
        <Badge $c="#e5484d">5</Badge><RunMark />
      </App_>
      <App_ aria-label="Edge">
        <svg width="30" height="30" viewBox="0 0 30 30"><defs><linearGradient id="ed" x1="0" x2="1"><stop stopColor="#1b9de2" /><stop offset="1" stopColor="#5de34c" /></linearGradient></defs><circle cx="15" cy="15" r="15" fill="#0c6cc0" /><path d="M0 14C1 5 8 0 15 0c9 0 15 6 15 13 0 5-4 7-8 7-3 0-5-1-4-3 2-3 0-8-6-8-5 0-10 1-12 5z" fill="url(#ed)" /><path d="M10 18c0-4 3-6 5-6 4 0 4 3 2.500 5-1 3 3 5 6 4.500 2 0 3.500-.5 5-1.500-3 6-8 7-11 6.500-4-.5-7.500-4-7.500-8.500z" fill="#3d1e23" /><path d="M10 18c0 4 3 8 8 8.500 3 .5 6 0 9-3-4 6-10 7-14 6.500C6 28 4 20 10 14z" fill="#114a8b" /></svg>
        <RunMark />
      </App_>
    </Apps>
    <Tray>
      <TrayButton $mr={12} aria-label="Ausgeblendete Symbole"><Icon w={14} h={10} color="#fff" sw={1.800}><path d="m1 8 6-6 6 6" /></Icon></TrayButton>
      <TrayButton $mr={10} aria-label="OneDrive">
        <svg width="21" height="18" viewBox="0 0 21 18"><path d="M4 14a4 4 0 0 1 0-8Q6 0 11 1t5.500 5A4 4 0 0 1 17 14z" fill="#0a6cc4" /><path d="M1 12q0-5 6-5l8 5-2 2H4q-3 0-3-2z" fill="#28a8ea" /><circle cx="15" cy="12.500" r="5.500" fill="#fff" /><path d="M12 12a3 3 0 0 1 5.500-1.200M18 13a3 3 0 0 1-5.500 1.200M17.800 9v2h-2M12.200 16v-2h2" stroke="#0a6cc4" fill="none" strokeWidth="1.200" /></svg>
      </TrayButton>
      <TrayButton aria-label="WLAN"><Icon w={20} h={16} color="#fff" sw={1.600}><path d="M1 6q9-8 18 0M4 9q6-5.500 12 0M7 12q3-3 6 0" /><circle cx="10" cy="14" r="1.300" fill="#fff" /></Icon></TrayButton>
      <TrayButton aria-label="Lautstärke"><Icon w={20} h={18} color="#fff" sw={1.400}><path d="M1 6h3l5-4.500v15L4 12H1zM11.500 6q2 3 0 6M14 3.500q4 5.500 0 11" /><path d="M16.500 1.500q5.500 7.500 0 15" stroke="#8b777a" /></Icon></TrayButton>
      <TrayButton $mr={9} aria-label="Akku"><Icon w={20} h={18} color="#fff" sw={1.400}><rect x="1.500" y="4.500" width="15.500" height="12" rx="3" /><path d="M7 7h8v7.500H4V11zM18 9v3h1V9z" fill="#fff" /><path d="M4 0v4h3L2.500 10V6H0z" fill="#fff" stroke="#3d1e23" strokeWidth=".8" /></Icon></TrayButton>
      <Clock>11:32<br />16.02.2025</Clock>
    </Tray>
  </Taskbar>
);

export default function App() {
  return (
    <Window>
      <Global />
      <Header />
      <TabRow>
        <Tabs>{tabs.map((t) => <Tab key={t} $on={t === "Formformat"}>{t}</Tab>)}</Tabs>
        <Actions>
          <Action aria-label="Kommentare"><Icon w={15}><path d="M1 1.500h13v9H6.500L3.500 14v-3.500H1z" /></Icon></Action>
          <Action><Icon w={15}><circle cx="7.500" cy="7.500" r="6.700" /><circle cx="7.500" cy="7.500" r="4" fill="#262626" stroke="none" /></Icon>Aufzeichnen</Action>
          <Action><Icon w={15}><circle cx="8" cy="2.500" r="1.900" /><circle cx="12.500" cy="3" r="1.500" /><path d="M8 6h6.300v4q0 3-3 3.500M5 12q1 2.500 3.500 2.300T11 11V6" /><path d="M0 4h8v8H0z" fill="#262626" stroke="none" /><path d="M2 6h4M4 6v4.500" stroke="#fff" /></Icon>Präsentieren in Teams</Action>
          <Action $primary><Icon w={15} color="#fff"><path d="M5 5H1v9h11v-3M4 10q1-5 6-5V1.500L14.300 6 10 10V7.500Q6 7.500 4 10z" /></Icon>Freigeben <Chevron color="#fff" /></Action>
        </Actions>
      </TabRow>
      <RibbonPanel />
      <WorkArea />
      <StatusBar />
      <TaskbarPanel />
    </Window>
  );
}
